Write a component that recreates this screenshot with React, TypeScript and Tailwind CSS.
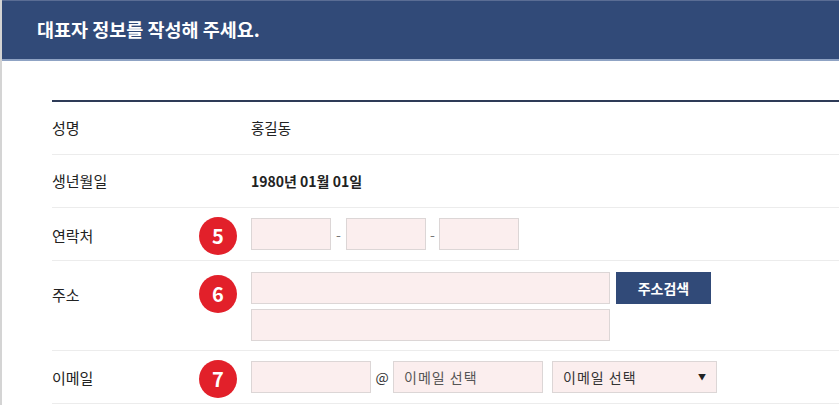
const font = { fontFamily: '"Malgun Gothic", "Noto Sans CJK KR", "Noto Sans", sans-serif' };

function Badge({ n }: { n: number }) {
  return (
    <div className="flex h-[38px] w-[38px] shrink-0 items-center justify-center rounded-full bg-[#e2202a] text-[20px] font-bold text-white">
      {n}
    </div>
  );
}

function Box({ w, children }: { w: string; children?: React.ReactNode }) {
  return (
    <div className={`${w} flex h-[32px] items-center border border-[#dcd6d6] bg-[#fbeeee] px-[10px] text-[14px] text-[#555]`}>
      {children}
    </div>
  );
}

export default function App() {
  return (
    <div style={font} className="min-h-[405px] w-[839px] overflow-hidden border-l-2 border-[#d4d4d4] bg-white text-[#222]">
      <div className="flex h-[61px] items-center border-t border-b-2 border-t-[#5a6d94] border-b-[#8fa3c4] bg-[#314a78] pl-[35px]">
        <h1 className="text-[18.5px] font-bold text-white">대표자 정보를 작성해 주세요.</h1>
      </div>

      <div className="pl-[50px] pt-[39px]">
        <div className="border-t-2 border-[#2e3b57] text-[15px]">
          <div className="flex h-[53px] items-center border-b border-[#ececec]">
            <div className="w-[199px]">성명</div>
            <div className="text-[14.5px]">홍길동</div>
          </div>
          <div className="flex h-[53px] items-center border-b border-[#ececec]">
            <div className="w-[199px]">생년월일</div>
            <div className="text-[14px] font-semibold">1980년 01월 01일</div>
          </div>
          <div className="flex h-[53px] items-center border-b border-[#ececec]">
            <div className="w-[147px] pt-[4px]">연락처</div>
            <div className="mt-[4px] w-[52px]">
              <Badge n={5} />
            </div>
            <div className="flex items-center">
              <Box w="w-[80px]" />
              <span className="w-[15px] text-center text-[14px] text-[#777]">-</span>
              <Box w="w-[80px]" />
              <span className="w-[13px] text-center text-[14px] text-[#777]">-</span>
              <Box w="w-[80px]" />
            </div>
          </div>
          <div className="flex h-[90px] items-start border-b border-[#ececec] pt-[11px]">
            <div className="mt-[15px] w-[147px] leading-none">주소</div>
            <div className="mt-[3px] w-[52px]">
              <Badge n={6} />
            </div>
            <div className="flex flex-col gap-[5px]">
              <div className="flex gap-[6px]">
                <Box w="w-[359px]" />
                <button className="h-[32px] w-[95px] bg-[#314a78] text-[14px] font-bold text-white">주소검색</button>
              </div>
              <Box w="w-[359px]" />
            </div>
          </div>
          <div className="flex h-[53px] items-center border-b border-[#ececec]">
            <div className="w-[147px] pt-[3px]">이메일</div>
            <div className="mt-[3px] w-[52px]">
              <Badge n={7} />
            </div>
            <div className="flex items-center text-[14px]">
              <Box w="w-[120px]" />
              <span className="w-[22px] text-center text-[#333]">@</span>
              <Box w="w-[150px]">
                <span className="tracking-[1px]">이메일 선택</span>
              </Box>
              <div className="w-[9px]" />
              <Box w="w-[165px]">
                <span className="flex-1 tracking-[1px] text-[#333]">이메일 선택</span>
                <span className="text-[8px] text-[#222]">▼</span>
              </Box>
            </div>
          </div>
        </div>
      </div>
    </div>
  );
}
